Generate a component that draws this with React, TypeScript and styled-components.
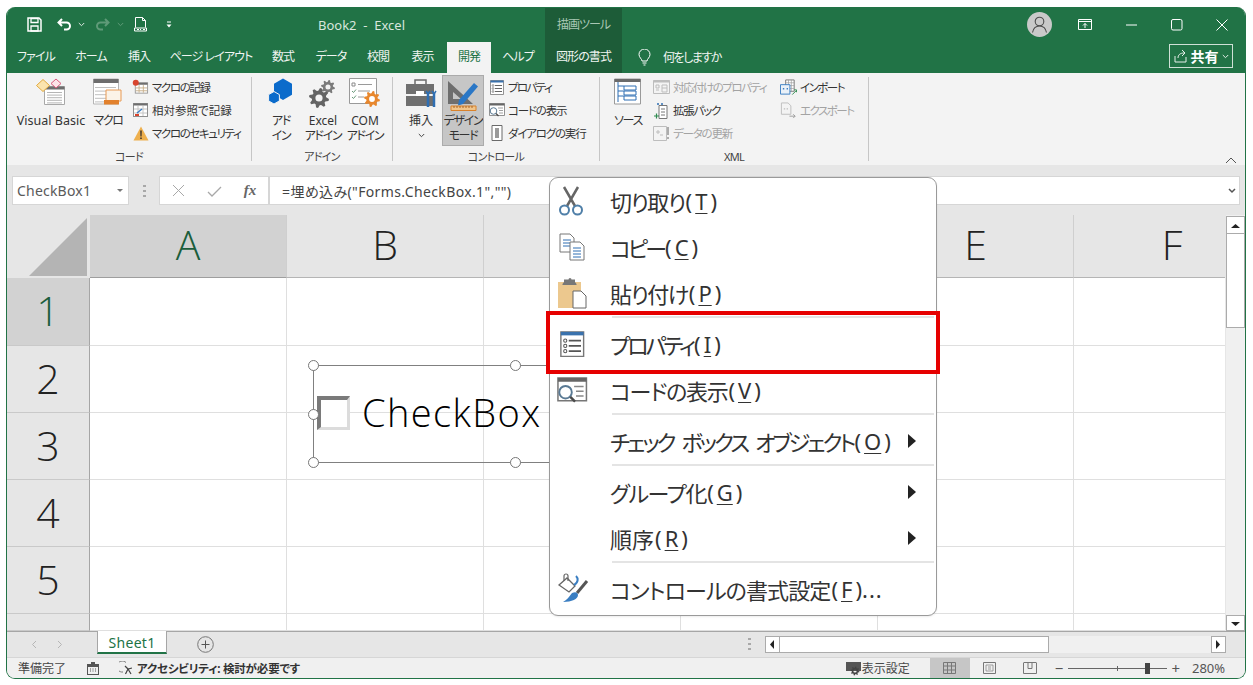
import { FC, ReactNode } from 'react';
import styled, { createGlobalStyle } from 'styled-components';

const UI_FONT = `"Noto Sans", "Noto Sans CJK JP", sans-serif`;
const GREEN = '#217346';
const DARK_GREEN = '#1d5c38';
const DISABLED = '#a3a3a3';

const GlobalStyle = createGlobalStyle`
    html, body { margin: 0; padding: 0; background: #fff; overflow: hidden; }
    body {
        font-family: ${UI_FONT};
        font-feature-settings: "palt";
    }
    * { box-sizing: border-box; }
`;

const Window = styled.div`
    position: relative;
    margin: 7px 0 0 6px;
    width: 1240px;
    height: 672px;
    display: flex;
    flex-direction: column;
    border: 1px solid ${GREEN};
    border-top: none;
    border-radius: 9px;
    overflow: hidden;
    background: #e6e6e6;
`;

/* title bar */
const TitleBar = styled.div`
    display: flex;
    height: 35px;
    background: ${GREEN};
    color: #fff;
    flex: none;
`;
const QuickAccess = styled.div`
    width: 311px;
    display: flex;
    align-items: center;
    padding-left: 20px;
`;
const QuickSlot = styled.span<{ $w: number }>`
    width: ${p => p.$w}px;
    display: flex;
    align-items: center;
`;
const Title = styled.div`
    width: 227px;
    font-size: 13px;
    line-height: 37px;
    color: #d8e6dd;
    white-space: pre;
`;
const ContextLabel = styled.div`
    width: 77px;
    margin-top: 1px;
    background: ${DARK_GREEN};
    font-size: 12px;
    letter-spacing: -1px;
    line-height: 34px;
    text-align: center;
    color: #a9c7b4;
`;
const Controls = styled.div`
    margin-left: auto;
    display: flex;
`;
const ControlButton = styled.div`
    width: 45.6px;
    display: flex;
    align-items: center;
    justify-content: center;
`;

/* tab row */
const TabBar = styled.div`
    display: flex;
    height: 30.5px;
    background: ${GREEN};
    flex: none;
    padding-left: 1px;
`;
const Tab = styled.div<{ $active?: boolean; $context?: boolean; $w: number }>`
    width: ${p => p.$w}px;
    font-size: 12px;
    line-height: 30px;
    letter-spacing: -0.9px;
    text-align: center;
    white-space: nowrap;
    color: ${p => (p.$active ? GREEN : '#f0f5f2')};
    background: ${p => (p.$active ? '#f3f3f3' : p.$context ? DARK_GREEN : 'transparent')};
`;
const TellMe = styled.div`
    display: flex;
    align-items: center;
    gap: 12px;
    margin-left: 16px;
    font-size: 12px;
    letter-spacing: -1.5px;
    color: #f0f5f2;
`;
const ShareButton = styled.div`
    margin: 2px 12px 0 auto;
    width: 64px;
    height: 24px;
    border: 1px solid #cfe0d6;
    display: flex;
    align-items: center;
    justify-content: center;
    gap: 3px;
    color: #fff;
    font-size: 14px;
    font-weight: 700;
`;

/* ribbon */
const Ribbon = styled.div`
    display: flex;
    height: 92.5px;
    background: #f3f3f3;
    flex: none;
    color: #333;
    font-size: 12px;
`;
const Group = styled.div<{ $w: number }>`
    width: ${p => p.$w}px;
    display: flex;
    flex-direction: column;
    flex: none;
`;
const GroupBody = styled.div<{ $pad: number }>`
    flex: 1;
    display: flex;
    padding-left: ${p => p.$pad}px;
    min-height: 0;
`;
const GroupLabel = styled.div`
    height: 16px;
    line-height: 16px;
    text-align: center;
    font-size: 11px;
    letter-spacing: -0.7px;
    color: #444;
`;
const GroupDivider = styled.div`
    width: 1px;
    margin: 4px 0;
    background: #c6c6c6;
    flex: none;
`;
const LargeButton = styled.div<{ $w: number; $pressed?: boolean; $ml?: number }>`
    width: ${p => p.$w}px;
    margin-left: ${p => p.$ml ?? 0}px;
    margin-top: ${p => (p.$pressed ? 2 : 0)}px;
    height: ${p => (p.$pressed ? '71px' : 'auto')};
    padding-top: ${p => (p.$pressed ? 3 : 5)}px;
    display: flex;
    flex-direction: column;
    align-items: center;
    text-align: center;
    line-height: 15px;
    white-space: nowrap;
    background: ${p => (p.$pressed ? '#c6c6c6' : 'transparent')};
    outline: ${p => (p.$pressed ? '1px solid #ababab' : 'none')};
    outline-offset: -1px;
    flex: none;
`;
const LargeIcon = styled.div`
    height: 35px;
    display: flex;
    align-items: flex-start;
    justify-content: center;
    flex: none;
`;
const Kana = styled.span`
    letter-spacing: -1.3px;
`;
const LatinLabel = styled.span`
    font-size: 12.5px;
`;
const DropHint = styled.span`
    margin-top: 5px;
`;
const SmallList = styled.div<{ $w?: number; $ml?: number }>`
    width: ${p => (p.$w ? `${p.$w}px` : 'auto')};
    margin-left: ${p => p.$ml ?? 0}px;
    padding-top: 3px;
    flex: none;
`;
const SmallRow = styled.div<{ $off?: boolean; $ls?: number }>`
    height: 23px;
    display: flex;
    align-items: center;
    gap: 3px;
    white-space: nowrap;
    font-size: 11.5px;
    letter-spacing: ${p => p.$ls ?? -1.2}px;
    color: ${p => (p.$off ? DISABLED : '#333')};
`;
const SmallIcon = styled.span`
    width: 17px;
    height: 17px;
    display: flex;
    align-items: center;
    justify-content: center;
    flex: none;
`;
const Collapse = styled.div`
    margin-left: auto;
    align-self: flex-end;
    padding: 0 8px 1px 0;
    line-height: 0;
`;

/* formula bar */
const FormulaRow = styled.div`
    display: flex;
    align-items: flex-start;
    height: 50px;
    padding: 11px 5px 0 5px;
    flex: none;
`;
const FieldBox = styled.div<{ $w?: number }>`
    height: 29px;
    width: ${p => (p.$w ? `${p.$w}px` : 'auto')};
    flex: ${p => (p.$w ? 'none' : 1)};
    background: #fff;
    border: 1px solid #d6d6d6;
    display: flex;
    align-items: center;
`;
const NameText = styled.span`
    flex: 1;
    padding-left: 4px;
    font-size: 14px;
    letter-spacing: 0.2px;
    color: #5a5a5a;
`;
const Dots = styled.div<{ $w: number }>`
    width: ${p => p.$w}px;
    display: flex;
    justify-content: center;
    padding-top: 8px;
    flex: none;
`;
const FxButton = styled.span`
    flex: 1;
    display: flex;
    justify-content: center;
`;
const FxGlyph = styled.span`
    font-family: "Liberation Serif", serif;
    font-style: italic;
    font-weight: 700;
    font-size: 15px;
    color: #666;
`;
const FormulaText = styled.span`
    flex: 1;
    padding-left: 12px;
    font-size: 14px;
    letter-spacing: 0.37px;
    color: #444;
    white-space: nowrap;
`;

/* sheet */
const SheetArea = styled.div`
    flex: 1;
    display: flex;
    min-height: 0;
    overflow: hidden;
    border-bottom: 1px solid #a6a6a6;
`;
const SheetGrid = styled.div`
    width: 1218px;
    overflow: hidden;
    display: grid;
    grid-template-columns: 83px 197px 197px 197px 197px 196px 197px;
    grid-template-rows: 63px 68px 67px 67px 67px 67px 1fr;
    flex: none;
`;
const Corner = styled.div`
    background: #e6e6e6;
    display: flex;
    align-items: flex-end;
    justify-content: flex-end;
    padding: 0 3px 2px 0;
`;
const ColHeader = styled.div<{ $on?: boolean }>`
    background: ${p => (p.$on ? '#d2d2d2' : '#e6e6e6')};
    color: ${p => (p.$on ? '#1b5e3c' : '#222')};
    border-right: 1px solid #cfcfcf;
    border-bottom: 1px solid ${p => (p.$on ? '#9e9e9e' : '#b5b5b5')};
    font-family: "Open Sans", sans-serif;
    font-weight: 300;
    font-size: 41px;
    line-height: 59px;
    text-align: center;
`;
const RowHeader = styled(ColHeader)`
    border-right: 1px solid #a6a6a6;
    border-bottom: 1px solid #c9c9c9;
    line-height: 64px;
`;
const Cell = styled.div`
    background: #fff;
    border-right: 1px solid #dfdfdf;
    border-bottom: 1px solid #dfdfdf;
`;
const VScroll = styled.div`
    width: 19px;
    margin-left: 1px;
    background: #f0f0f0;
    display: flex;
    flex-direction: column;
    padding-top: 1px;
    flex: none;
`;
const ScrollButton = styled.div<{ $h?: number; $w?: number }>`
    height: ${p => (p.$h ? `${p.$h}px` : 'auto')};
    width: ${p => (p.$w ? `${p.$w}px` : 'auto')};
    background: #fff;
    border: 1px solid #ababab;
    display: flex;
    align-items: center;
    justify-content: center;
    flex: none;
`;
const VThumb = styled.div`
    height: 94px;
    background: #fff;
    border: 1px solid #ababab;
    border-top: none;
    flex: none;
`;
const VTrack = styled.div`
    flex: 1;
`;

/* sheet tabs */
const SheetBar = styled.div`
    height: 25px;
    display: flex;
    background: #e6e6e6;
    flex: none;
`;
const SheetNav = styled.div`
    width: 90px;
    display: flex;
    align-items: center;
    padding-left: 24px;
    gap: 20px;
    color: #b5b5b5;
`;
const SheetTab = styled.div`
    width: 70px;
    height: 23px;
    margin-top: -1px;
    background: #fff;
    border: 1px solid #a6a6a6;
    border-top: none;
    border-bottom: 2px solid ${GREEN};
    text-align: center;
    font-size: 14px;
    line-height: 23px;
    letter-spacing: 0.3px;
    color: ${GREEN};
`;
const AddSheet = styled.div`
    margin-left: 30px;
    display: flex;
    align-items: center;
`;
const HScrollWrap = styled.div`
    margin-left: auto;
    display: flex;
    align-items: center;
    padding-right: 19px;
`;
const HScrollDots = styled.div`
    width: 32px;
    display: flex;
    justify-content: center;
`;
const HScroll = styled.div`
    width: 461px;
    height: 17px;
    display: flex;
    background: #f0f0f0;
`;
const HThumb = styled.div`
    width: 269px;
    background: #fff;
    border: 1px solid #ababab;
    border-left: none;
`;

/* status bar */
const StatusBar = styled.div`
    height: 21px;
    flex: none;
    display: flex;
    align-items: center;
    padding-left: 11px;
    background: #f0f0f0;
    border-top: 1px solid #d6d6d6;
    font-size: 12px;
    color: #444;
`;
const StatusIcon = styled.span<{ $ml: number }>`
    margin-left: ${p => p.$ml}px;
    display: flex;
`;
const AccessText = styled.span`
    margin-left: 3px;
    font-weight: 700;
    letter-spacing: -0.2px;
    color: #333;
    font-size: 11.5px;
`;
const StatusRight = styled.div`
    margin-left: auto;
    display: flex;
    align-items: stretch;
    height: 100%;
`;
const DisplaySetting = styled.div`
    display: flex;
    align-items: center;
    margin-right: 20px;
    font-size: 12px;
    color: #4a4a4a;
`;
const ViewButton = styled.div<{ $on?: boolean }>`
    width: 40px;
    display: flex;
    align-items: center;
    justify-content: center;
    background: ${p => (p.$on ? '#c6c6c6' : 'transparent')};
`;
const ZoomBox = styled.div`
    display: flex;
    align-items: center;
    margin-left: 5px;
    color: #555;
`;
const ZoomTrack = styled.div`
    position: relative;
    width: 99px;
    height: 1px;
    margin: 0 4px 0 5px;
    background: #666;
`;
const ZoomTick = styled.span`
    position: absolute;
    left: 49px;
    top: -2px;
    width: 1px;
    height: 5px;
    background: #666;
`;
const ZoomThumb = styled.span`
    position: absolute;
    left: 77px;
    top: -5px;
    width: 5px;
    height: 11px;
    background: #444;
`;
const ZoomValue = styled.span`
    width: 65px;
    padding-left: 12px;
    font-size: 13px;
    color: #555;
`;
const ZoomSign = styled.span`
    font-size: 15px;
    line-height: 1;
`;

/* floating things over the sheet */
const FormObject = styled.div`
    position: absolute;
    left: 306px;
    top: 358px;
    width: 300px;
    height: 98px;
    border: 1px solid #808080;
    display: flex;
    align-items: center;
    padding-left: 3px;
`;
const Handle = styled.span<{ $x: number; $y: number }>`
    position: absolute;
    left: ${p => p.$x}px;
    top: ${p => p.$y}px;
    width: 11px;
    height: 11px;
    border-radius: 50%;
    background: #fff;
    border: 1.5px solid #777;
`;
const FakeCheck = styled.span`
    width: 33px;
    height: 34px;
    margin-bottom: 2px;
    border-style: solid;
    border-width: 4px 3px 3px 4px;
    border-color: #7a7a7a #dcdcdc #dcdcdc #7a7a7a;
    background: #fff;
    flex: none;
`;
const ObjectText = styled.span`
    margin: 0 0 5px 12px;
    font-size: 38px;
    font-weight: 300;
    letter-spacing: 1.4px;
    color: #000;
    font-family: "Open Sans", sans-serif;
    white-space: nowrap;
`;
const Menu = styled.div`
    position: absolute;
    left: 542px;
    top: 170px;
    width: 388px;
    height: 439px;
    background: #fff;
    border: 1.5px solid #9a9a9a;
    border-radius: 9px;
    color: #333;
    box-shadow: 0 1px 2px rgba(0, 0, 0, 0.08);
`;
const MenuItem = styled.div`
    height: 46px;
    display: flex;
    align-items: center;
    padding-right: 20px;
    font-size: 22px;
    white-space: nowrap;
`;
const MenuIcon = styled.span`
    width: 60px;
    padding-right: 15px;
    display: flex;
    align-items: center;
    justify-content: center;
    flex: none;
`;
const MenuText = styled.span<{ $ls: number; $ws?: number }>`
    letter-spacing: ${p => p.$ls}px;
    word-spacing: ${p => p.$ws ?? 0}px;
`;
const AccelWrap = styled.span`
    letter-spacing: 0;
    margin-left: 1px;
`;
const Key = styled.span`
    margin: 0 3px;
    text-decoration: underline;
    text-underline-offset: 3px;
    text-decoration-thickness: 1px;
`;
const Ellipsis = styled.span`
    letter-spacing: 1px;
`;
const MenuArrow = styled.span`
    margin-left: auto;
    display: flex;
`;
const MenuSep = styled.div`
    height: 2px;
    margin: 0 2px 3px 62px;
    background: #e4e4e4;
`;
const RedBox = styled.div`
    position: absolute;
    left: 539px;
    top: 304px;
    width: 394px;
    height: 63px;
    border: 4px solid #e60000;
`;

/* drawings */
const Ico: FC<{ w: number; h: number; children: ReactNode }> = ({ w, h, children }) => (
    <svg width={w} height={h} viewBox={`0 0 ${w} ${h}`} fill="none" style={{ display: 'block' }}>
        {children}
    </svg>
);

// filled cog outline, used by the add-in icons
const gear = (cx: number, cy: number, r: number, teeth = 8) => {
    const pts: string[] = [];
    for (let i = 0; i < teeth * 4; i++) {
        const a = (i / (teeth * 4)) * Math.PI * 2 + Math.PI / (teeth * 4);
        const rad = i % 4 < 2 ? r : r * 0.72;
        pts.push(`${(cx + Math.cos(a) * rad).toFixed(2)} ${(cy + Math.sin(a) * rad).toFixed(2)}`);
    }
    const h = r * 0.36;
    return `M${pts.join('L')}Z M${cx - h} ${cy}a${h} ${h} 0 1 0 ${h * 2} 0a${h} ${h} 0 1 0 ${-h * 2} 0Z`;
};

const Gear: FC<{ x: number; y: number; r: number; c: string }> = ({ x, y, r, c }) => (
    <path d={gear(x, y, r)} fill={c} fillRule="evenodd" />
);

const Rows: FC<{ x: number; y: number; w: number; n: number; gap: number; c: string }> = ({ x, y, w, n, gap, c }) => (
    <>
        {Array.from({ length: n }, (_, i) => (
            <line key={i} x1={x} x2={x + w} y1={y + i * gap + 0.5} y2={y + i * gap + 0.5} stroke={c} />
        ))}
    </>
);

const SaveIcon = () => (
    <Ico w={15} h={15}>
        <path d="M1 1h11l2 2v11H1z" stroke="#fff" strokeWidth="1.5" />
        <path d="M4 1.500h7v4H4zM4 9h7v5H4z" stroke="#fff" strokeWidth="1.3" />
    </Ico>
);
const UndoIcon = () => (
    <Ico w={15} h={13}>
        <path d="M5 1L1.500 4.500 5 8M2 4.500h7.500a3.500 3.500 0 0 1 0 7H7" stroke="#fff" strokeWidth="2" />
    </Ico>
);
const RedoIcon = () => (
    <Ico w={15} h={13}>
        <path d="M10 1l3.500 3.500L10 8M13 4.500H5.500a3.500 3.500 0 0 0 0 7H8" stroke="#5f9a78" strokeWidth="2" />
    </Ico>
);
const TinyChevron: FC<{ c: string }> = ({ c }) => (
    <Ico w={7} h={5}>
        <path d="M.8 1l2.700 2.700L6.200 1" stroke={c} strokeWidth="1" />
    </Ico>
);
const PreviewIcon = () => (
    <Ico w={13} h={15}>
        <path d="M1.500.5h7l3 3v7M1.500.5v10M8.500.5v3h3" stroke="#fff" />
        <path d="M.5 11h12v3H.5z" stroke="#fff" />
        <path d="M3 12.500h2M6 12.500h1M9 12.500h2" stroke="#fff" />
    </Ico>
);
const CustomizeIcon = () => (
    <Ico w={6} h={7}>
        <path d="M1 1h4" stroke="#fff" />
        <path d="M.5 3.500h5L3 6.500z" fill="#fff" />
    </Ico>
);
const AvatarIcon = () => (
    <Ico w={25} h={25}>
        <circle cx="12.500" cy="12.500" r="12.500" fill="#c9c9c9" />
        <circle cx="12.500" cy="9.500" r="4.300" stroke="#4c4c4c" strokeWidth="1.100" />
        <path d="M5.500 20.500c.8-4.500 3.500-6.500 7-6.500s6.200 2 7 6.500" stroke="#4c4c4c" strokeWidth="1.100" />
    </Ico>
);
const RibbonDisplayIcon = () => (
    <Ico w={14} h={11}>
        <path d="M.5.500h13v10H.5zM.5 2.500h13" stroke="#fff" />
        <path d="M7 9V4.500M5 6.500L7 4.500l2 2" stroke="#fff" />
    </Ico>
);
const MinIcon = () => (
    <Ico w={11} h={2}>
        <path d="M0 1h11" stroke="#fff" />
    </Ico>
);
const MaxIcon = () => (
    <Ico w={12} h={12}>
        <rect x=".5" y=".5" width="10.500" height="10.500" rx="1.500" stroke="#fff" />
    </Ico>
);
const CloseIcon = () => (
    <Ico w={12} h={12}>
        <path d="M.5.500l11 11M11.500.500l-11 11" stroke="#fff" />
    </Ico>
);
const BulbIcon = () => (
    <Ico w={13} h={17}>
        <path d="M4 12c0-2-3-3.500-3-6.500a5.500 5.500 0 0 1 11 0C12 8.500 9 10 9 12z" stroke="#fff" />
        <path d="M4.500 14h4M5.500 16h2" stroke="#fff" />
    </Ico>
);
const ShareIcon = () => (
    <Ico w={14} h={14}>
        <path d="M1 7v6h11V8" stroke="#e6efe9" />
        <path d="M4 9c0-3 2-5 6-5M8 1l3 3-3 3" stroke="#e6efe9" />
    </Ico>
);

const VisualBasicIcon = () => (
    <Ico w={32} h={28}>
        <path d="M9.500 8.500h20v18h-20z" fill="#fff" stroke="#a8a8a8" />
        <path d="M9.500 8.500h20v3h-20z" fill="#6e6e6e" />
        <Rows x={12} y={14} w={15} n={5} gap={2.6} c="#b5b5b5" />
        <path d="M8 1.500l6.500 6-6.500 6-6.500-6z" fill="#fbe4ae" stroke="#e2a93d" />
        <path d="M21 1l5 4.500-5 4.500-5-4.500z" fill="#fde3e8" stroke="#d85b7c" />
    </Ico>
);
const MacroIcon = () => (
    <Ico w={31} h={28}>
        <path d="M.5 1h25v25H.5z" fill="#fff" stroke="#b5b5b5" />
        <path d="M.5 1h25v4H.5z" fill="#6d6d6d" />
        <Rows x={2} y={9} w={21} n={5} gap={3.6} c="#bfbfbf" />
        <path d="M13 12h15v11H13z" fill="#fbf3e8" stroke="#e89a55" />
        <path d="M11 22h15v4.500H11z" fill="#e2812d" />
    </Ico>
);
const RecordIcon = () => (
    <Ico w={18} h={16}>
        <rect x="3.500" y="3.500" width="13" height="11" fill="#fff" stroke="#9a9a9a" />
        <path d="M3.500 3.500h13v2h-13z" fill="#6e6e6e" />
        <path d="M7.500 6v8M12 6v8M4 9h12M4 12h12" stroke="#c9b08c" />
        <circle cx="4" cy="3.500" r="3.200" fill="#d8452e" />
    </Ico>
);
const RelativeIcon = () => (
    <Ico w={17} h={16}>
        <rect x="1.500" y="1.500" width="14" height="13" fill="#fff" stroke="#8f8f8f" />
        <path d="M1.500 1.500h14v2h-14z" fill="#6e6e6e" />
        <path d="M6 4v10M11 4v10M2 7h13M2 11h13" stroke="#c4c4c4" />
        <path d="M5 11l5-4" stroke="#3a7ec2" strokeWidth="1.500" />
        <path d="M3 12h4v2H3z" fill="#d8452e" />
    </Ico>
);
const WarningIcon = () => (
    <Ico w={16} h={15}>
        <path d="M8 .5L15.500 14.500H.5z" fill="#eeb04e" />
        <path d="M7.200 4.500h1.600l-.2 6H7.400zM7.200 11.500h1.600v1.600H7.200z" fill="#40352a" />
    </Ico>
);
const AddinIcon = () => (
    <Ico w={26} h={26}>
        <path d="M15 .5l9 5.200v11L15 22l-9-5.300v-11z" fill="#0b6bcb" />
        <path d="M6 13.500l5.400 3.100v6.300L6 26 .6 22.900v-6.300z" fill="#0b6bcb" stroke="#f3f3f3" />
    </Ico>
);
const ExcelAddinIcon = () => (
    <Ico w={28} h={30}>
        <Gear x={19} y={9} r={7} c="#7b7b7b" />
        <Gear x={10} y={20} r={10} c="#646464" />
    </Ico>
);
const ComAddinIcon = () => (
    <Ico w={32} h={30}>
        <path d="M.5.500h27v25H.5z" fill="#fff" stroke="#9a9a9a" />
        <path d="M3 5h3v3H3z" stroke="#8a8a8a" />
        <path d="M9 6.500h14M9 13h12M9 19h6" stroke="#9a9a9a" />
        <path d="M3 13l1.500 1.500L7 11.500M3 19l1.500 1.500L7 17.500" stroke="#6a9a7a" />
        <Gear x={23} y={21} r={8} c="#e8872d" />
    </Ico>
);
const ToolboxIcon = () => (
    <Ico w={31} h={31}>
        <path d="M9 6V2h11v4" stroke="#6a6a6a" strokeWidth="1.500" />
        <path d="M0 6h28v10H0zM0 18h28v10H0z" fill="#6f6f6f" />
        <path d="M10 13h8v5h-8z" fill="#fff" />
        <path d="M22 15v14M28 15v14" stroke="#2f6fb3" strokeWidth="2.500" />
        <path d="M20 13l2 3 2-3M26 13l2 3 2-3" stroke="#2f6fb3" strokeWidth="1.500" />
    </Ico>
);
const DesignIcon = () => (
    <Ico w={34} h={34}>
        <path d="M2 3v23h25z M7 14v7h8z" fill="#6e6e6e" fillRule="evenodd" />
        <path d="M13 22L28 5l4 3.500L17 26l-5 1.500z" fill="#2a77c6" />
        <path d="M5 28h25v4.500H5z" fill="#f0c489" stroke="#d9822b" />
        <path d="M8 28v2M11 28v2M14 28v2M17 28v2M20 28v2M23 28v2M26 28v2" stroke="#a5652a" />
    </Ico>
);
const PropsIcon: FC<{ s?: number }> = ({ s = 1 }) => (
    <svg width={14 * s} height={15 * s} viewBox="0 0 14 15" fill="none" style={{ display: 'block' }}>
        <path d="M.5.500h13v14H.5z" fill="#fff" stroke="#777" strokeWidth=".8" />
        <path d="M.5.500h13v2H.5z" fill="#3a72ad" />
        <path d="M5 5.500h7M5 8.500h7M5 11.500h7" stroke="#555" strokeWidth=".9" />
        <circle cx="3" cy="5.500" r=".9" stroke="#555" strokeWidth=".6" />
        <circle cx="3" cy="8.500" r=".9" stroke="#555" strokeWidth=".6" />
        <circle cx="3" cy="11.500" r=".9" stroke="#555" strokeWidth=".6" />
    </svg>
);
const CodeIcon: FC<{ s?: number }> = ({ s = 1 }) => (
    <svg width={16 * s} height={14 * s} viewBox="0 0 16 14" fill="none" style={{ display: 'block' }}>
        <path d="M.5.500h15v12H.5z" fill="#fff" stroke="#777" strokeWidth=".8" />
        <path d="M.5.500h15v2H.5z" fill="#666" />
        <path d="M9 5h5M10 7.500h4M10 10h4" stroke="#888" strokeWidth=".8" />
        <circle cx="4.500" cy="8" r="3.300" fill="#fff" stroke="#5a7a94" />
        <path d="M7 10.500L9.500 13" stroke="#4a4a4a" strokeWidth="1.300" />
    </svg>
);
const DialogIcon = () => (
    <Ico w={14} h={16}>
        <path d="M2 .5h10v15H2z" fill="#fff" stroke="#6a6a6a" />
        <path d="M5 3h4v10H5z" fill="#9a9a9a" />
    </Ico>
);
const SourceIcon = () => (
    <Ico w={30} h={27}>
        <path d="M1.500 1h26v25h-26z" fill="#fff" stroke="#9a9a9a" />
        <path d="M1.500 1h26v3h-26z" fill="#6a6a6a" />
        <path d="M5 4v20M5 8h6M5 13h6M5 18h6" stroke="#2f6fb3" />
        <path d="M11 8h12v4H11zM11 13h12v4H11zM11 18h12v4H11z" stroke="#2f6fb3" />
    </Ico>
);
const MapPropsIcon = () => (
    <Ico w={17} h={15}>
        <path d="M.5.500h16v13H.5z" stroke="#bdbdbd" />
        <path d="M.5.500h16v2H.5z" fill="#bdbdbd" />
        <path d="M3 5h3v3H3zM3 10h3M9 5h5v7H9zM9 8h5" stroke="#bdbdbd" />
    </Ico>
);
const ExpansionIcon = () => (
    <Ico w={17} h={17}>
        <path d="M6 3.500h8v13H6z" fill="#fff" stroke="#777" />
        <path d="M8 7h4M8 10h4M8 13h4" stroke="#777" />
        <path d="M1 14h5M3.500 11.500v5" stroke="#2d8a4e" strokeWidth="1.200" />
        <circle cx="5" cy="2" r="1" fill="#2f6fb3" />
        <circle cx="9" cy="2" r="1" fill="#2f6fb3" />
    </Ico>
);
const RefreshIcon = () => (
    <Ico w={17} h={15}>
        <path d="M.5.500h13v14H.5z" stroke="#bdbdbd" />
        <path d="M4 5h2v2H4zM7 9h3" stroke="#bdbdbd" />
        <path d="M15 1v8M15 11v2" stroke="#9a9a9a" strokeWidth="1.600" />
    </Ico>
);
const ImportIcon = () => (
    <Ico w={18} h={17}>
        <path d="M6 .5h9v12H6z" fill="#fff" stroke="#777" />
        <path d="M6 3.500h9M9 .5v12M12 .5v12M6 6.500h9M6 9.500h9" stroke="#999" strokeWidth=".7" />
        <path d="M.5 5.500h10v10H.5z" fill="#eaf1f8" stroke="#3a7ec2" />
        <path d="M3 9h1.500v1.500H3zM7 9h1.500v1.500H7z" fill="#3a7ec2" />
        <path d="M13 16l4-4M15 11h2.500v2.500" stroke="#2d8a4e" />
    </Ico>
);
const ExportIcon = () => (
    <Ico w={18} h={17}>
        <path d="M1.500.5h7l3 3v9h-10z" stroke="#bdbdbd" />
        <path d="M4 6h1.500v1.500H4zM7 6h1.500v1.500H7z" fill="#bdbdbd" />
        <path d="M10 14.500h6M14 12.500l2 2-2 2" stroke="#9a9a9a" />
    </Ico>
);

const ScissorsIcon = () => (
    <Ico w={30} h={30}>
        <path d="M6 1l11 19M20 1L9 20" stroke="#666" strokeWidth="2.500" />
        <circle cx="6.500" cy="24" r="4.500" stroke="#4f7fa8" strokeWidth="2" fill="#fff" />
        <circle cx="19.500" cy="24" r="4.500" stroke="#4f7fa8" strokeWidth="2" fill="#fff" />
    </Ico>
);
const CopyIcon = () => (
    <Ico w={27} h={28}>
        <path d="M1 1h10l4 4v14H1z" fill="#fff" stroke="#777" />
        <path d="M4 7h8M4 10h8M4 13h8" stroke="#2f6fb3" />
        <path d="M11 9h10l4 4v14H11z" fill="#fff" stroke="#777" />
        <path d="M14 15h8M14 18h8M14 21h8M14 24h8" stroke="#2f6fb3" />
    </Ico>
);
const PasteIcon = () => (
    <Ico w={31} h={32}>
        <path d="M1 5h23v26H1z" fill="#ecc88e" />
        <path d="M7 5V2.500h4.500a1.500 1.500 0 0 1 3 0H18V5l1.500 2v1h-14V7z" fill="#777" />
        <path d="M16 14h8l5 5v12H16z" fill="#fff" stroke="#666" />
    </Ico>
);
const FormatIcon = () => (
    <Ico w={32} h={32}>
        <path d="M2 12L10 5l8 8-6 6z" fill="#fff" stroke="#666" strokeWidth="1.300" />
        <path d="M7 8V3a2 2 0 0 1 4 0v5" stroke="#666" strokeWidth="1.200" />
        <path d="M30 8L20 20" stroke="#555" strokeWidth="3" />
        <path d="M15 20c4-2 6 0 6 2 0 4-6 7-15 7 4-2 6-5 9-9z" fill="#3a7ec2" />
        <path d="M19 3c2 2 3 6-2 9" stroke="#3a7ec2" strokeWidth="2" />
    </Ico>
);
const SubmenuArrow = () => (
    <Ico w={8} h={14}>
        <path d="M0 0l8 7-8 7z" fill="#222" />
    </Ico>
);
const CornerTriangle = () => (
    <Ico w={58} h={58}>
        <path d="M58 0v58H0z" fill="#b4b4b4" />
    </Ico>
);
const ArrowGlyph: FC<{ dir: 'up' | 'down' | 'left' | 'right' }> = ({ dir }) => {
    const d = { up: 'M0 5l4.500-4 4.500 4z', down: 'M0 1l4.500 4 4.500-4z', left: 'M6 0L2 4.500 6 9z', right: 'M2 0l4 4.500L2 9z' }[dir];
    return (
        <Ico w={9} h={9}>
            <path d={d} fill="#222" transform={dir === 'up' || dir === 'down' ? 'translate(0 2)' : ''} />
        </Ico>
    );
};
const DotsGlyph = () => (
    <Ico w={3} h={15}>
        <path d="M0 1h3v2H0zM0 6h3v2H0zM0 11h3v2H0z" fill="#a8a8a8" />
    </Ico>
);

const Accel: FC<{ k: string }> = ({ k }) => (
    <AccelWrap>(<Key>{k}</Key>)</AccelWrap>
);

const TABS: [string, number][] = [
    ['ファイル', 56], ['ホーム', 54], ['挿入', 42], ['ページ レイアウト', 102], ['数式', 42],
    ['データ', 54], ['校閲', 40], ['表示', 49],
];
const COLS = ['A', 'B', 'C', 'D', 'E', 'F'];
const ROWS = ['1', '2', '3', '4', '5', ''];

const App: FC = () => {
    return (
        <>
            <GlobalStyle />
            <Window>
                <TitleBar>
                    <QuickAccess>
                        <QuickSlot $w={30}><SaveIcon /></QuickSlot>
                        <QuickSlot $w={21}><UndoIcon /></QuickSlot>
                        <QuickSlot $w={17}><TinyChevron c="#dfe9e3" /></QuickSlot>
                        <QuickSlot $w={22}><RedoIcon /></QuickSlot>
                        <QuickSlot $w={17}><TinyChevron c="#5f9a78" /></QuickSlot>
                        <QuickSlot $w={32}><PreviewIcon /></QuickSlot>
                        <QuickSlot $w={10}><CustomizeIcon /></QuickSlot>
                    </QuickAccess>
                    <Title>{'Book2  -  Excel'}</Title>
                    <ContextLabel>描画ツール</ContextLabel>
                    <Controls>
                        <ControlButton><AvatarIcon /></ControlButton>
                        <ControlButton><RibbonDisplayIcon /></ControlButton>
                        <ControlButton><MinIcon /></ControlButton>
                        <ControlButton><MaxIcon /></ControlButton>
                        <ControlButton><CloseIcon /></ControlButton>
                    </Controls>
                </TitleBar>

                <TabBar>
                    {TABS.map(([t, w]) => <Tab key={t} $w={w}>{t}</Tab>)}
                    <Tab $active $w={44}>開発</Tab>
                    <Tab $w={54}>ヘルプ</Tab>
                    <Tab $context $w={77}>図形の書式</Tab>
                    <TellMe><BulbIcon />何をしますか</TellMe>
                    <ShareButton><ShareIcon />共有<TinyChevron c="#e6efe9" /></ShareButton>
                </TabBar>

                <Ribbon>
                    <Group $w={244}>
                        <GroupBody $pad={9}>
                            <LargeButton $w={70}>
                                <LargeIcon><VisualBasicIcon /></LargeIcon>
                                <LatinLabel>Visual Basic</LatinLabel>
                            </LargeButton>
                            <LargeButton $w={44}>
                                <LargeIcon><MacroIcon /></LargeIcon>
                                <Kana>マクロ</Kana>
                            </LargeButton>
                            <SmallList $ml={2}>
                                <SmallRow $ls={-1.4}><SmallIcon><RecordIcon /></SmallIcon>マクロの記録</SmallRow>
                                <SmallRow $ls={0}><SmallIcon><RelativeIcon /></SmallIcon>相対参照で記録</SmallRow>
                                <SmallRow $ls={-1.4}><SmallIcon><WarningIcon /></SmallIcon>マクロのセキュリティ</SmallRow>
                            </SmallList>
                        </GroupBody>
                        <GroupLabel>コード</GroupLabel>
                    </Group>
                    <GroupDivider />
                    <Group $w={140}>
                        <GroupBody $pad={8}>
                            <LargeButton $w={42}>
                                <LargeIcon><AddinIcon /></LargeIcon>
                                <Kana>アド<br />イン</Kana>
                            </LargeButton>
                            <LargeButton $w={42}>
                                <LargeIcon><ExcelAddinIcon /></LargeIcon>
                                Excel<br /><Kana>アドイン</Kana>
                            </LargeButton>
                            <LargeButton $w={42}>
                                <LargeIcon><ComAddinIcon /></LargeIcon>
                                COM<br /><Kana>アドイン</Kana>
                            </LargeButton>
                        </GroupBody>
                        <GroupLabel>アドイン</GroupLabel>
                    </Group>
                    <GroupDivider />
                    <Group $w={206}>
                        <GroupBody $pad={10}>
                            <LargeButton $w={36}>
                                <LargeIcon><ToolboxIcon /></LargeIcon>
                                挿入
                                <DropHint><TinyChevron c="#444" /></DropHint>
                            </LargeButton>
                            <LargeButton $w={42} $ml={3} $pressed>
                                <LargeIcon><DesignIcon /></LargeIcon>
                                <Kana>デザイン<br />モード</Kana>
                            </LargeButton>
                            <SmallList $ml={4}>
                                <SmallRow $ls={-1.6}><SmallIcon><PropsIcon /></SmallIcon>プロパティ</SmallRow>
                                <SmallRow><SmallIcon><CodeIcon /></SmallIcon>コードの表示</SmallRow>
                                <SmallRow><SmallIcon><DialogIcon /></SmallIcon>ダイアログの実行</SmallRow>
                            </SmallList>
                        </GroupBody>
                        <GroupLabel>コントロール</GroupLabel>
                    </Group>
                    <GroupDivider />
                    <Group $w={268}>
                        <GroupBody $pad={10}>
                            <LargeButton $w={36}>
                                <LargeIcon><SourceIcon /></LargeIcon>
                                <Kana>ソース</Kana>
                            </LargeButton>
                            <SmallList $ml={7} $w={127}>
                                <SmallRow $off $ls={-1.5}><SmallIcon><MapPropsIcon /></SmallIcon>対応付けのプロパティ</SmallRow>
                                <SmallRow><SmallIcon><ExpansionIcon /></SmallIcon>拡張パック</SmallRow>
                                <SmallRow $off><SmallIcon><RefreshIcon /></SmallIcon>データの更新</SmallRow>
                            </SmallList>
                            <SmallList>
                                <SmallRow $ls={-1.5}><SmallIcon><ImportIcon /></SmallIcon>インポート</SmallRow>
                                <SmallRow $off $ls={-1.5}><SmallIcon><ExportIcon /></SmallIcon>エクスポート</SmallRow>
                            </SmallList>
                        </GroupBody>
                        <GroupLabel>XML</GroupLabel>
                    </Group>
                    <GroupDivider />
                    <Collapse>
                        <Ico w={12} h={7}>
                            <path d="M1 6l5-5 5 5" stroke="#555" />
                        </Ico>
                    </Collapse>
                </Ribbon>

                <FormulaRow>
                    <FieldBox $w={117}>
                        <NameText>CheckBox1</NameText>
                        <Ico w={16} h={6}><path d="M5 1h6L8 4z" fill="#777" /></Ico>
                    </FieldBox>
                    <Dots $w={30}><DotsGlyph /></Dots>
                    <FieldBox $w={110}>
                        <FxButton>
                            <Ico w={13} h={13}><path d="M1 1l11 11M12 1L1 12" stroke="#a8a8a8" /></Ico>
                        </FxButton>
                        <FxButton>
                            <Ico w={15} h={12}><path d="M1 7l4 4 9-9" stroke="#a8a8a8" strokeWidth="1.300" /></Ico>
                        </FxButton>
                        <FxButton><FxGlyph>fx</FxGlyph></FxButton>
                    </FieldBox>
                    <FieldBox>
                        <FormulaText>{'=埋め込み("Forms.CheckBox.1","")'}</FormulaText>
                        <Ico w={14} h={6}><path d="M4 1l3 3 3-3" stroke="#555" strokeWidth="1.500" /></Ico>
                    </FieldBox>
                </FormulaRow>

                <SheetArea>
                    <SheetGrid>
                        <Corner><CornerTriangle /></Corner>
                        {COLS.map(c => <ColHeader key={c} $on={c === 'A'}>{c}</ColHeader>)}
                        {ROWS.flatMap(r => [
                            <RowHeader key={`h${r}`} $on={r === '1'}>{r}</RowHeader>,
                            ...COLS.map(c => <Cell key={`${c}${r}`} />),
                        ])}
                    </SheetGrid>
                    <VScroll>
                        <ScrollButton $h={18}><ArrowGlyph dir="up" /></ScrollButton>
                        <VThumb />
                        <VTrack />
                        <ScrollButton $h={16}><ArrowGlyph dir="down" /></ScrollButton>
                    </VScroll>
                </SheetArea>

                <SheetBar>
                    <SheetNav>
                        <Ico w={6} h={9}><path d="M5 1L1.500 4.500 5 8" stroke="#b5b5b5" /></Ico>
                        <Ico w={6} h={9}><path d="M1 1l3.500 3.500L1 8" stroke="#b5b5b5" /></Ico>
                    </SheetNav>
                    <SheetTab>Sheet1</SheetTab>
                    <AddSheet>
                        <Ico w={17} h={17}>
                            <circle cx="8.500" cy="8.500" r="7.800" stroke="#777" />
                            <path d="M8.500 4.500v8M4.500 8.500h8" stroke="#555" />
                        </Ico>
                    </AddSheet>
                    <HScrollWrap>
                        <HScrollDots><DotsGlyph /></HScrollDots>
                        <HScroll>
                            <ScrollButton $w={15}><ArrowGlyph dir="left" /></ScrollButton>
                            <HThumb />
                            <VTrack />
                            <ScrollButton $w={15}><ArrowGlyph dir="right" /></ScrollButton>
                        </HScroll>
                    </HScrollWrap>
                </SheetBar>

                <StatusBar>
                    準備完了
                    <StatusIcon $ml={21}>
                        <Ico w={12} h={13}>
                            <path d="M0 2h12v11H0z" fill="#555" />
                            <path d="M1 5h10v7H1z" fill="#f0f0f0" />
                            <path d="M3 7h1M5.500 7h1M8 7h1M3 9h1M5.500 9h1M8 9h1" stroke="#555" />
                            <path d="M4 0h4v3H4z" fill="#555" />
                        </Ico>
                    </StatusIcon>
                    <StatusIcon $ml={20}>
                        <Ico w={15} h={14}>
                            <path d="M7 1.500a5.500 5.500 0 1 0-3 9.500" stroke="#777" />
                            <path d="M6 5l3 3 4-1M6.500 13L9 8l3 5" stroke="#444" strokeWidth="1.200" />
                        </Ico>
                    </StatusIcon>
                    <AccessText>アクセシビリティ: 検討が必要です</AccessText>
                    <StatusRight>
                        <DisplaySetting>
                            <Ico w={16} h={15}>
                                <path d="M0 1h15v9H0z" fill="#555" />
                                <Gear x={9} y={10} r={4.500} c="#444" />
                            </Ico>
                            表示設定
                        </DisplaySetting>
                        <ViewButton $on>
                            <Ico w={13} h={12}>
                                <path d="M.5.500h12v11H.5zM.5 4h12M.5 8h12M4.500.500v11M8.500.500v11" stroke="#777" />
                            </Ico>
                        </ViewButton>
                        <ViewButton>
                            <Ico w={13} h={12}>
                                <path d="M.5.500h12v11H.5z" stroke="#777" />
                                <path d="M3 3h7v6H3zM5 5h3M5 7h3" stroke="#888" strokeWidth=".8" />
                            </Ico>
                        </ViewButton>
                        <ViewButton>
                            <Ico w={14} h={12}>
                                <path d="M.5 1v10.500h13V1M.5.500h13M5 .5v6h4v-6" stroke="#777" />
                            </Ico>
                        </ViewButton>
                        <ZoomBox>
                            <ZoomSign>−</ZoomSign>
                            <ZoomTrack>
                                <ZoomTick />
                                <ZoomThumb />
                            </ZoomTrack>
                            <ZoomSign>+</ZoomSign>
                            <ZoomValue>280%</ZoomValue>
                        </ZoomBox>
                    </StatusRight>
                </StatusBar>

                <FormObject>
                    <FakeCheck />
                    <ObjectText>CheckBox</ObjectText>
                    <Handle $x={-6} $y={-6} />
                    <Handle $x={196} $y={-6} />
                    <Handle $x={-6} $y={43} />
                    <Handle $x={-6} $y={91} />
                    <Handle $x={196} $y={91} />
                </FormObject>

                <Menu>
                    <MenuItem><MenuIcon><ScissorsIcon /></MenuIcon><MenuText $ls={-1.5}>切り取り</MenuText><Accel k="T" /></MenuItem>
                    <MenuItem><MenuIcon><CopyIcon /></MenuIcon><MenuText $ls={-3}>コピー</MenuText><Accel k="C" /></MenuItem>
                    <MenuItem><MenuIcon><PasteIcon /></MenuIcon><MenuText $ls={-1.5}>貼り付け</MenuText><Accel k="P" /></MenuItem>
                    <MenuSep />
                    <MenuItem><MenuIcon><PropsIcon s={1.75} /></MenuIcon><MenuText $ls={-3}>プロパティ</MenuText><Accel k="I" /></MenuItem>
                    <MenuItem><MenuIcon><CodeIcon s={1.9} /></MenuIcon><MenuText $ls={-1.3}>コードの表示</MenuText><Accel k="V" /></MenuItem>
                    <MenuSep />
                    <MenuItem><MenuIcon /><MenuText $ls={-2.9} $ws={5}>チェック ボックス オブジェクト</MenuText><Accel k="O" /><MenuArrow><SubmenuArrow /></MenuArrow></MenuItem>
                    <MenuSep />
                    <MenuItem><MenuIcon /><MenuText $ls={-1.4}>グループ化</MenuText><Accel k="G" /><MenuArrow><SubmenuArrow /></MenuArrow></MenuItem>
                    <MenuItem><MenuIcon /><MenuText $ls={0}>順序</MenuText><Accel k="R" /><MenuArrow><SubmenuArrow /></MenuArrow></MenuItem>
                    <MenuSep />
                    <MenuItem><MenuIcon><FormatIcon /></MenuIcon><MenuText $ls={-0.9}>コントロールの書式設定</MenuText><Accel k="F" /><Ellipsis>...</Ellipsis></MenuItem>
                </Menu>

                <RedBox />
            </Window>
        </>
    );
};

export default App;
